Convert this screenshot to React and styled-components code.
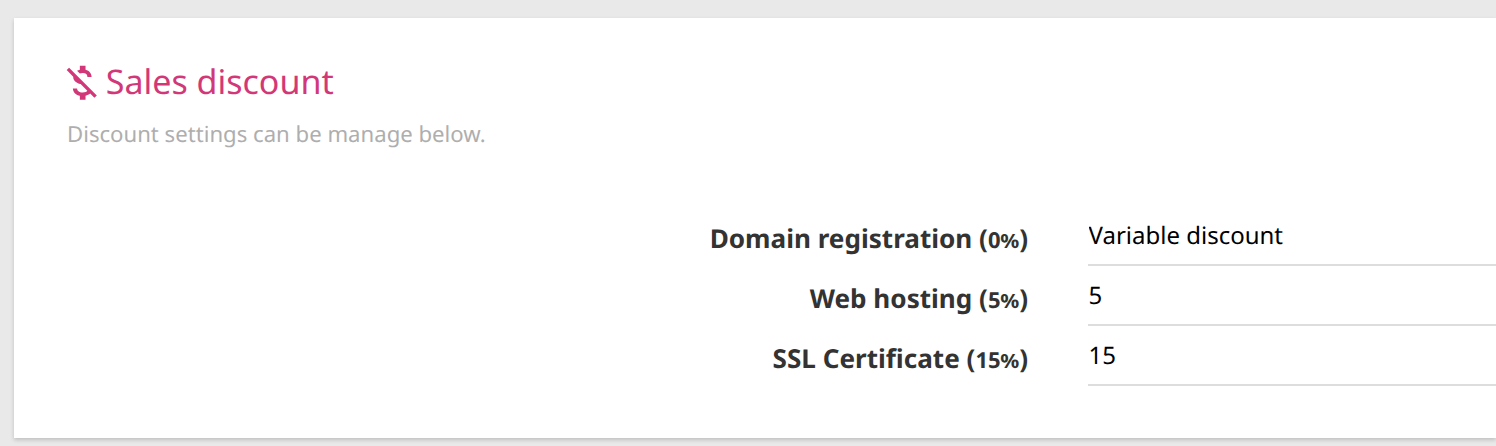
import React from "react";
import styled, { createGlobalStyle } from "styled-components";
import { MdMoneyOff } from "react-icons/md";

const GlobalStyle = createGlobalStyle`
  * { box-sizing: border-box; }
  body {
    margin: 0;
    background: #e9e9e9;
    font-family: "Noto Sans", sans-serif;
    text-rendering: geometricPrecision;
    overflow: hidden;
  }
`;

const Page = styled.main`
  height: 446px;
  padding: 18px 0 8px 14px;
`;

const Card = styled.section`
  height: 420px;
  padding: 42px 0 0 53px;
  background: #fff;
  box-shadow: 0 2px 4px rgba(0, 0, 0, 0.18);
`;

const Title = styled.h1`
  display: flex;
  align-items: center;
  height: 43px;
  margin: 0;
  color: #d23878;
  font-size: 34px;
  font-weight: 400;
  line-height: 43px;
`;

const TitleIcon = styled(MdMoneyOff)`
  flex: none;
  width: 45.5px;
  height: 45.5px;
  margin: 2.5px 1.25px 0 -8px;
`;

const Subtitle = styled.p`
  height: 30px;
  margin: 16px 0 0;
  color: #aeaeae;
  font-size: 22.15px;
  line-height: 30px;
`;

const Form = styled.form`
  display: grid;
  margin-top: 57px;
`;

const Row = styled.div`
  display: grid;
  grid-template-columns: 961px 1fr;
  column-gap: 60px;
  height: 60px;
`;

const Label = styled.label`
  padding-top: 14px;
  color: #333;
  font-size: 26.1px;
  font-weight: 700;
  line-height: 36px;
  text-align: right;
`;

const Percent = styled.small`
  font-size: 22px;
`;

const PercentSign = styled.span`
  display: inline-block;
  margin: 0 0.5px;
  font-size: 19.5px;
  line-height: 1;
  transform: scaleX(1.08);
`;

const Field = styled.input`
  min-width: 0;
  height: 60px;
  padding: 1px 0 0 0.5px;
  border: 0;
  border-bottom: 2px solid #ddd;
  border-radius: 0;
  outline: 0;
  background: transparent;
  color: #000;
  font: 24px "Noto Sans", sans-serif;
  text-rendering: geometricPrecision;
`;

const discounts = [
  { id: "domain", name: "Domain registration", percent: 0, value: "Variable discount" },
  { id: "hosting", name: "Web hosting", percent: 5, value: "5" },
  { id: "ssl", name: "SSL Certificate", percent: 15, value: "15" },
];

export default function App() {
  return (
    <Page>
      <GlobalStyle />
      <Card>
        <Title><TitleIcon />Sales discount</Title>
        <Subtitle>Discount settings can be manage below.</Subtitle>
        <Form>
          {discounts.map(({ id, name, percent, value }) => (
            <Row key={id}>
              <Label htmlFor={id}>
                {name} (<Percent>{percent}<PercentSign>%</PercentSign></Percent>)
              </Label>
              <Field id={id} defaultValue={value} />
            </Row>
          ))}
        </Form>
      </Card>
    </Page>
  );
}
